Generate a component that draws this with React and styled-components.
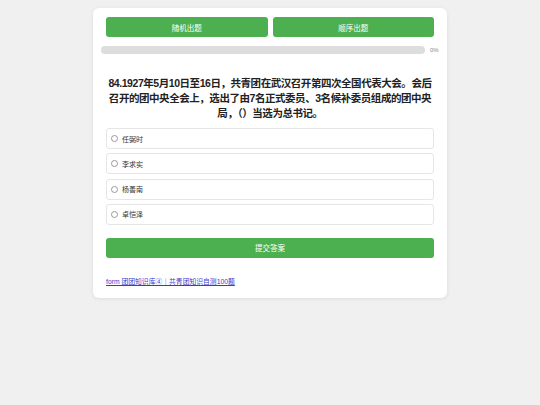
import React, { useState } from "react";
import styled, { createGlobalStyle } from "styled-components";

const GlobalStyle = createGlobalStyle`
  html, body {
    margin: 0;
    padding: 0;
    background: #f0f0f0;
    font-family: "Liberation Sans", "Noto Sans CJK SC", sans-serif;
  }
`;

const options = ["任弼时", "李求实", "杨善南", "卓恺泽"];

function App() {
  const [picked, setPicked] = useState(null);

  return (
    <>
      <GlobalStyle />
      <Page>
        <Card>
          <ModeBar>
            <GreenButton type="button">随机出题</GreenButton>
            <GreenButton type="button">顺序出题</GreenButton>
          </ModeBar>
          <ProgressRow>
            <Track>
              <Fill style={{ width: "0%" }} />
            </Track>
            <Percent>0%</Percent>
          </ProgressRow>
          <Question>
            84.1927年5月10日至16日，共青团在武汉召开第四次全国代表大会。会后召开的团中央全会上，选出了由7名正式委员、3名候补委员组成的团中央局，（）当选为总书记。
          </Question>
          <Options>
            {options.map((name, i) => (
              <Option key={name} onClick={() => setPicked(i)}>
                <Radio $checked={picked === i} />
                {name}
              </Option>
            ))}
          </Options>
          <SubmitButton type="button">提交答案</SubmitButton>
          <Footer>
            <a href="#">form 团团知识库④｜共青团知识自测100题</a>
          </Footer>
        </Card>
      </Page>
    </>
  );
}

export default App;

const Page = styled.div`
  width: 540px;
  height: 405px;
  padding-top: 8px;
  box-sizing: border-box;
  display: flex;
  justify-content: center;
`;

const Card = styled.div`
  width: 354px;
  height: 290px;
  box-sizing: border-box;
  padding: 9px 13px 0;
  background: #fff;
  border-radius: 6px;
  box-shadow: 0 1px 4px rgba(0, 0, 0, 0.08);
  display: flex;
  flex-direction: column;
`;

const ModeBar = styled.div`
  display: grid;
  grid-template-columns: 1fr 1fr;
  gap: 5px;
`;

const GreenButton = styled.button`
  height: 20px;
  border: none;
  border-radius: 3px;
  background: #4caf50;
  color: #fff;
  font-family: "Liberation Sans", "Noto Sans CJK SC", sans-serif;
  font-size: 7.5px;
  padding: 0;
  cursor: pointer;
`;

const SubmitButton = styled(GreenButton)`
  margin-top: 13px;
  width: 100%;
`;

const ProgressRow = styled.div`
  display: flex;
  align-items: center;
  gap: 5px;
  margin: 9px -5px 0 -5px;
`;

const Track = styled.div`
  flex: 1;
  height: 8px;
  border-radius: 4px;
  background: #dddddd;
  overflow: hidden;
`;

const Fill = styled.div`
  height: 100%;
  background: #4caf50;
`;

const Percent = styled.span`
  font-size: 6px;
  color: #888;
  width: 9px;
`;

const Question = styled.h2`
  margin: 22px 0 7px;
  font-size: 10.5px;
  letter-spacing: -0.45px;
  line-height: 15px;
  font-weight: bold;
  color: #222;
  text-align: center;
`;

const Options = styled.div`
  display: flex;
  flex-direction: column;
  gap: 4.3px;
`;

const Option = styled.label`
  height: 21px;
  box-sizing: border-box;
  border: 1px solid #e6e6e6;
  border-radius: 3px;
  display: flex;
  align-items: center;
  gap: 4px;
  padding-left: 4px;
  font-size: 7px;
  color: #333;
  cursor: pointer;
`;

const Radio = styled.span`
  width: 5px;
  height: 5px;
  border-radius: 50%;
  border: 0.6px solid #999;
  background: ${(p) => (p.$checked ? "#4caf50" : "#fff")};
`;

const Footer = styled.div`
  margin-top: 18px;
  font-size: 6.8px;

  a {
    color: #3a3acc;
    text-decoration: underline;
  }
`;
